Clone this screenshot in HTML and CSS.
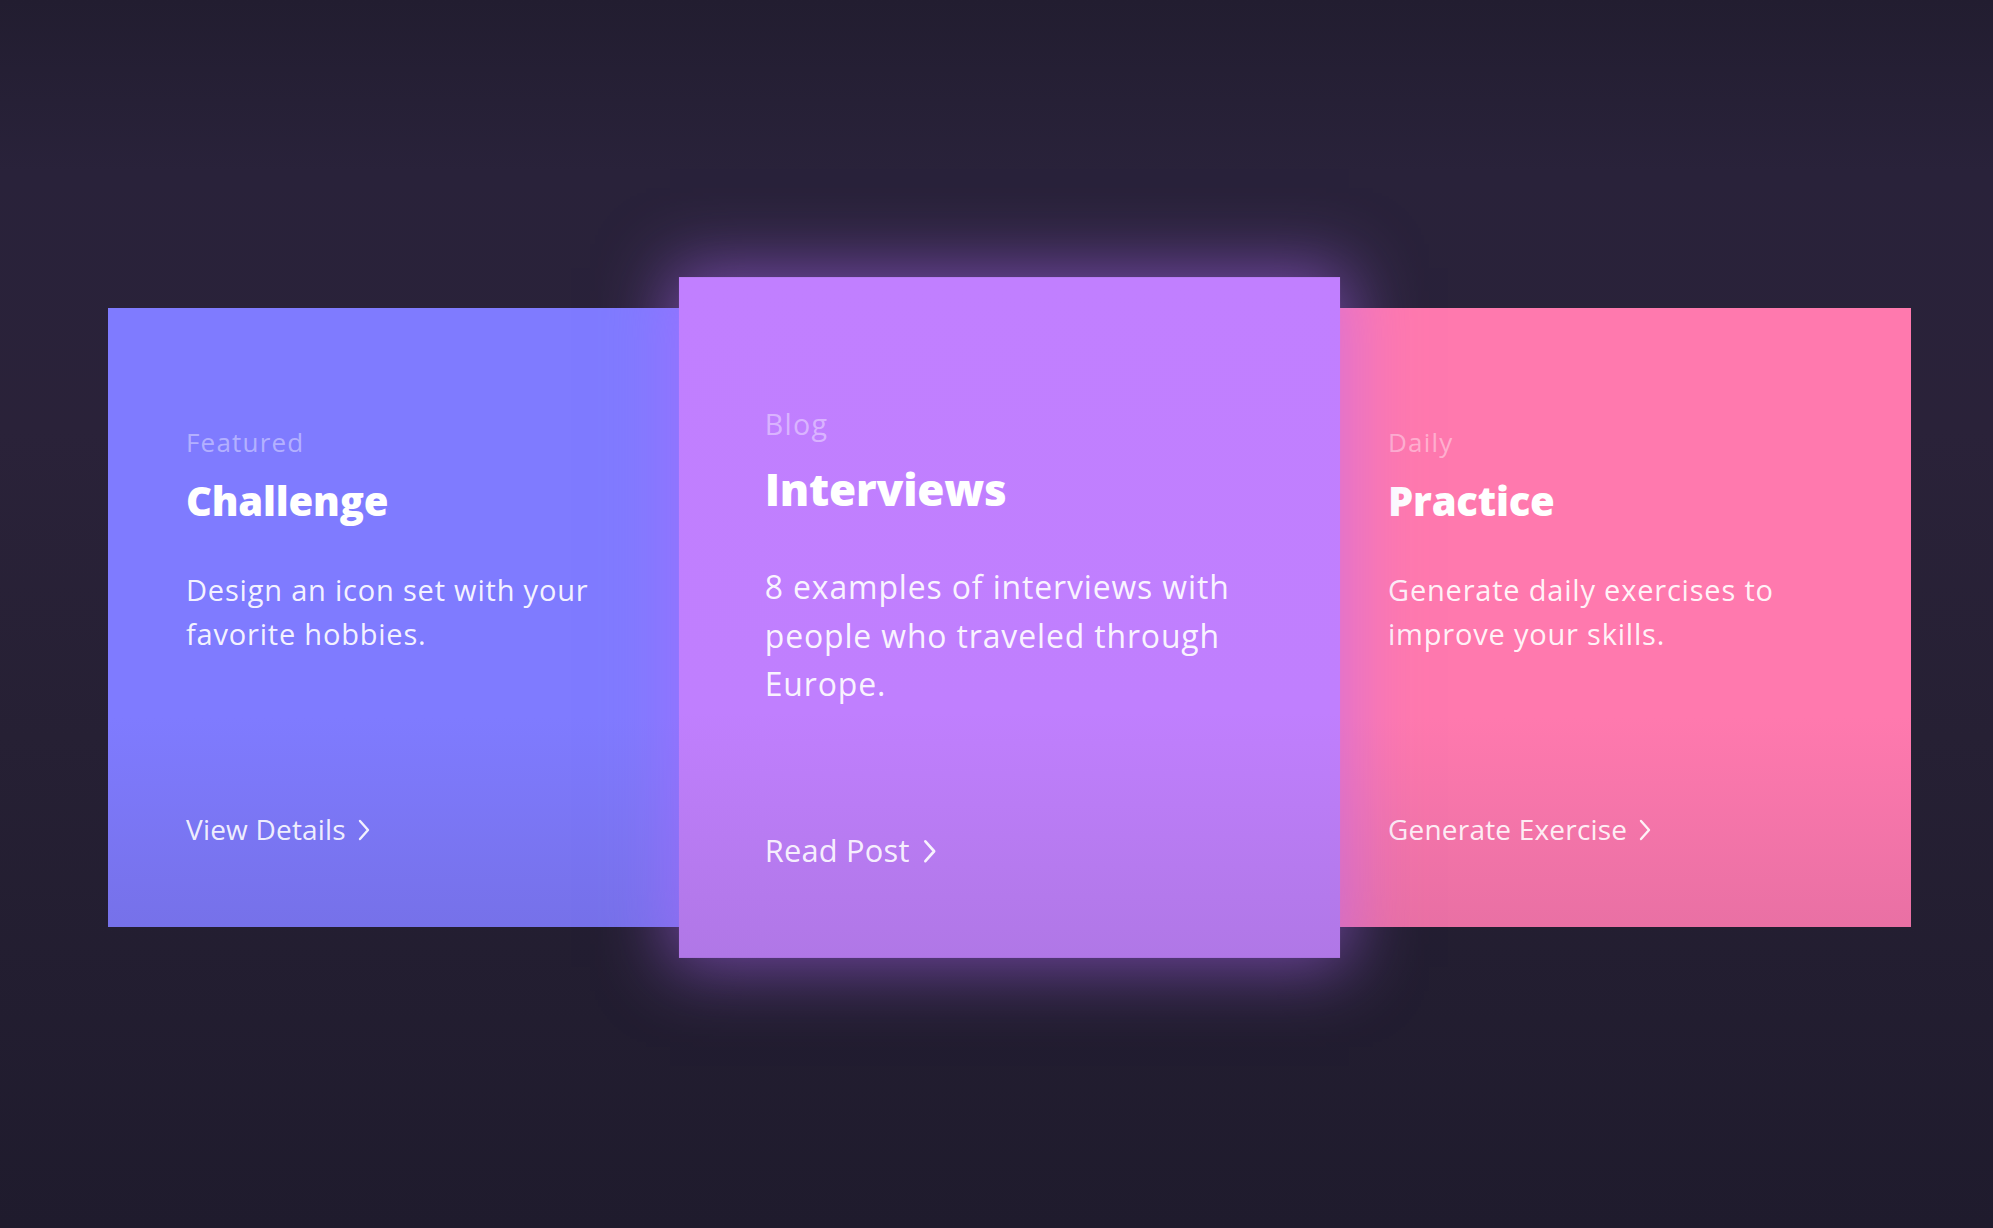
FILE: index.html
```html
<!DOCTYPE html>
<html lang="en">
<head>
<meta charset="utf-8">
<title>Cards</title>
<link rel="stylesheet" href="styles.css">
</head>
<body>
<main class="cards">
  <article class="card card-blue">
    <span class="label">Featured</span>
    <h2 class="title">Challenge</h2>
    <p class="text">Design an icon set with your favorite hobbies.</p>
    <a class="link" href="#">View Details
      <svg class="chev" width="12" height="22" viewBox="0 0 12 22"><polyline points="2,2 10,11 2,20" fill="none" stroke="currentColor" stroke-width="2.4" stroke-linecap="round" stroke-linejoin="round"/></svg>
    </a>
  </article>
  <article class="card card-purple">
    <span class="label">Blog</span>
    <h2 class="title">Interviews</h2>
    <p class="text">8 examples of interviews with people who traveled through Europe.</p>
    <a class="link" href="#">Read Post
      <svg class="chev" width="12" height="22" viewBox="0 0 12 22"><polyline points="2,2 10,11 2,20" fill="none" stroke="currentColor" stroke-width="2.4" stroke-linecap="round" stroke-linejoin="round"/></svg>
    </a>
  </article>
  <article class="card card-pink">
    <span class="label">Daily</span>
    <h2 class="title">Practice</h2>
    <p class="text">Generate daily exercises to improve your skills.</p>
    <a class="link" href="#">Generate Exercise
      <svg class="chev" width="12" height="22" viewBox="0 0 12 22"><polyline points="2,2 10,11 2,20" fill="none" stroke="currentColor" stroke-width="2.4" stroke-linecap="round" stroke-linejoin="round"/></svg>
    </a>
  </article>
</main>
</body>
</html>
```
FILE: styles.css
```css
* { box-sizing: border-box; }

html, body {
  margin: 0;
  height: 100%;
}

body {
  background: linear-gradient(180deg, #221d30 0%, #29223a 14%, #2a2239 35%, #262034 60%, #1f1b2d 100%);
  font-family: "Open Sans", "Noto Sans", sans-serif;
  color: #fff;
  overflow: hidden;
}

.cards {
  display: flex;
  padding: 308px 0 0 108px;
}

.card {
  flex: 0 0 601px;
  width: 601px;
  height: 619px;
  display: flex;
  flex-direction: column;
  align-items: flex-start;
  padding: 116px 60px 80px 78px;
}

.card-blue {
  background: linear-gradient(180deg, #7f7bff 0%, #7f7bff 66%, #7671e9 100%);
}

.card-purple {
  background: linear-gradient(180deg, #c17fff 0%, #c07ffe 64%, #b077e6 100%);
  transform: scale(1.1);
  z-index: 2;
  box-shadow: 0 0 60px 8px rgba(178, 105, 255, 0.55);
}

.card-pink {
  background: linear-gradient(180deg, #ff79ae 0%, #ff79ae 66%, #e970a4 100%);
}

.label {
  display: block;
  font-size: 26px;
  line-height: 36px;
  font-weight: 400;
  letter-spacing: 1.2px;
  color: rgba(255, 255, 255, 0.42);
}

.title {
  margin: 16px 0 0;
  font-size: 40px;
  line-height: 50px;
  font-weight: 800;
  letter-spacing: -0.2px;
  color: #fff;
}

.text {
  margin: 42px 0 0;
  font-size: 29px;
  line-height: 44px;
  font-weight: 500;
  letter-spacing: 0.8px;
  color: rgba(255, 255, 255, 0.93);
}

.link {
  margin-top: auto;
  display: inline-flex;
  align-items: center;
  gap: 12px;
  font-size: 28px;
  line-height: 36px;
  font-weight: 500;
  letter-spacing: 0.2px;
  color: rgba(255, 255, 255, 0.9);
  text-decoration: none;
}

.chev {
  display: block;
  margin-top: 2px;
}
```
